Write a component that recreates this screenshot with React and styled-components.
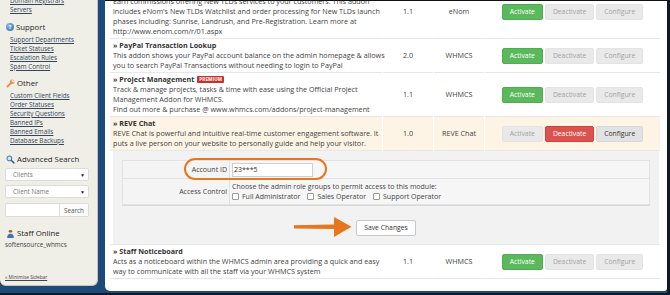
import React from 'react';
import styled, { createGlobalStyle, css } from 'styled-components';

const Global = createGlobalStyle`
  html, body { margin: 0; padding: 0; }
  body {
    font-family: "Open Sans", "Liberation Sans", sans-serif;
    width: 670px; height: 295px; overflow: hidden; background: #1c4a79;
  }
  * { box-sizing: border-box; }
`;

const Frame = styled.div`
  width: 670px; height: 295px;
  background: #1c4a79;
  border-right: 3px solid #101a24;
  border-bottom: 2px solid #101a24;
  display: flex; align-items: flex-start; gap: 7px;
  overflow: hidden;
`;

/* ---------- Sidebar ---------- */
const Sidebar = styled.aside`
  width: 98px; height: 286px; flex: none;
  background: #efeee7;
  border-right: 1px solid #c6c5bc;
  border-bottom: 1px solid #c6c5bc;
  border-radius: 0 0 6px 6px;
  padding: 0 8px 4px 5px;
  display: flex; flex-direction: column;
  overflow: hidden;
`;

const LinkList = styled.div`
  display: flex; flex-direction: column;
  margin: ${p => p.$first ? '-4px' : '0'} 0 0 5px;
`;

const SideLink = styled.a`
  display: block; height: 9px; line-height: 9px;
  font-size: 6.3px; color: #35465a; text-decoration: underline;
  white-space: nowrap;
`;

const SideHead = styled.div`
  display: flex; align-items: center; gap: 2px;
  height: 12px; margin: ${p => p.$mt}px 0 ${p => p.$mb}px 1px;
  font-size: 7.8px; color: #1e1e1e; white-space: nowrap;
`;

const QIcon = styled.span`
  width: 8px; height: 8px; border-radius: 50%;
  background: radial-gradient(circle at 35% 30%, #8bb6e6, #2f68ad);
  color: #fff; font-size: 5.5px; font-weight: 700; line-height: 8px; text-align: center;
`;

const SelectBox = styled.div`
  height: 13px; margin-top: ${p => p.$mt}px;
  background: #fff; border: 1px solid #dcdcdc; border-radius: 2px;
  display: flex; align-items: center; justify-content: space-between;
  padding: 0 3px 0 7px;
  font-size: 6.3px; color: #777;
`;

const Caret = styled.span`
  font-size: 5px; color: #222;
`;

const SearchRow = styled.div`
  height: 14px; margin-top: 5px; display: flex;
`;

const SearchInput = styled.div`
  flex: 1; background: #fff; border: 1px solid #dcdcdc; border-radius: 2px 0 0 2px;
`;

const SearchBtn = styled.div`
  width: 29px; background: #fbfbfb; border: 1px solid #dcdcdc; border-left: none;
  border-radius: 0 2px 2px 0; font-size: 6.3px; color: #555;
  display: flex; align-items: center; justify-content: center;
`;

const StaffName = styled.div`
  margin-top: 1px; height: 9px; line-height: 9px; font-size: 6.3px; color: #444;
`;

const Minimise = styled.a`
  margin-top: auto; height: 8px; line-height: 8px; font-size: 4.8px; color: #444;
  text-decoration: underline;
`;

/* ---------- Content ---------- */
const Content = styled.main`
  position: relative;
  width: 562px; height: 291px; flex: none;
  background: #fff;
  border-top: 1px solid #111;
  border-radius: 0 0 3px 5px;
  padding: 0 0 0 4px;
  overflow: hidden;
`;

const Table = styled.table`
  width: 552px; table-layout: fixed;
  border-collapse: separate; border-spacing: 1px 0;
  margin-top: -16px;
`;

const Row = styled.tr`
  background: ${p => p.$active ? '#fdf4e6' : '#fff'};
`;

const Cell = styled.td`
  padding: 1px 3px 2px;
  border-bottom: 1px solid #e7e7e7;
  vertical-align: middle;
  font-size: 7.2px; line-height: 10px; color: #444;
  white-space: nowrap;
  text-align: ${p => p.$align || 'left'};
  ${p => p.$actions && css`padding: 0;`}
`;

const Title = styled.div`
  font-weight: 700; color: #333; display: flex; align-items: center; gap: 3px;
`;

const Premium = styled.span`
  background: #c9302c; color: #fff; font-size: 4.6px; font-weight: 700;
  line-height: 7px; padding: 0 2px; border-radius: 1px; letter-spacing: 0.1px;
`;

const Buttons = styled.div`
  display: flex; justify-content: center; gap: 2px;
`;

const variants = {
  success: css`background: #5cb85c; border-color: #4cae4c; color: #fff;`,
  danger: css`background: #d9534f; border-color: #d43f3a; color: #fff;`,
  default: css`background: #e2e2e2; border-color: #d8d8d8; color: #333;`,
  disabled: css`background: #e9e9e9; border-color: #e3e3e3; color: #a3a3a3;`,
};

const Btn = styled.span`
  height: 16px; padding: 0 7px; border: 1px solid; border-radius: 2px;
  font-size: 6.8px; line-height: 14px;
  ${p => variants[p.$v]}
`;

const ConfigCell = styled.td`
  padding: 0 1px 0 3px; border-bottom: 1px solid #e7e7e7;
`;

const ConfigPanel = styled.div`
  background: #f2f2f2;
  padding: 9px 9px 8px;
  display: flex; flex-direction: column; align-items: center;
`;

const FormTable = styled.table`
  position: relative;
  width: 100%; border-collapse: collapse;
  border: 1px solid #d9d9d9;
  font-size: 7px; color: #444;
`;

const Label = styled.td`
  width: 107px; text-align: right; padding: 0 2px 0 0;
  background: #f4f4f4; border: 1px solid #e2e2e2;
  height: ${p => p.$h}px; white-space: nowrap;
`;

const Field = styled.td`
  padding: 0 2px; background: #f6f6f6; border: 1px solid #e2e2e2;
  line-height: 10px; white-space: nowrap;
`;

const Input = styled.div`
  width: 81px; height: 14px; background: #fff; border: 1px solid #cfcfcf;
  font-size: 7px; color: #333; padding: 0 1px; line-height: 12px;
`;

const Checks = styled.div`
  display: flex; gap: 7px;
`;

const Check = styled.span`
  display: flex; align-items: center; gap: 3px;
  &::before {
    content: ''; width: 5px; height: 5px; border: 1px solid #9a9a9a;
    background: #fff; border-radius: 1px;
  }
`;

const Highlight = styled.div`
  position: absolute; left: 61px; top: -3px; width: 143px; height: 22px;
  border: 2px solid #e5771e; border-radius: 11px; pointer-events: none;
`;

const SaveWrap = styled.div`
  position: relative; margin-top: 14px;
`;

const SaveBtn = styled.span`
  display: block; height: 16px; padding: 0 7px; line-height: 14px;
  background: #fff; border: 1px solid #c8c8c8; border-radius: 2px;
  font-size: 6.8px; color: #333;
`;

const Arrow = styled.svg`
  position: absolute; right: calc(100% + 4px); top: -4px;
`;

/* ---------- Icons ---------- */
const WrenchIcon = () => (
  <svg width="9" height="9" viewBox="0 0 16 16">
    <path d="M2.5 13.5 L9 7" stroke="#e98a3f" strokeWidth="3.2" strokeLinecap="round" />
    <circle cx="11" cy="5" r="4" fill="#e98a3f" />
    <path d="M11.5 1 L15 4.5 L13 6.5 L9.5 3 Z" fill="#efeee7" />
  </svg>
);

const SearchIcon = () => (
  <svg width="9" height="9" viewBox="0 0 16 16">
    <circle cx="6" cy="6" r="4.2" fill="#cfe3f7" stroke="#4d7fb8" strokeWidth="1.8" />
    <path d="M9.3 9.3 L14 14" stroke="#3b5f8a" strokeWidth="2.6" strokeLinecap="round" />
  </svg>
);

const StaffIcon = () => (
  <svg width="9" height="9" viewBox="0 0 16 16">
    <circle cx="8" cy="4.5" r="3.3" fill="#e6a36b" />
    <path d="M8 2 C5 2 4.6 4 4.8 4.8 L11.2 4.8 C11.4 4 11 2 8 2 Z" fill="#7a4a26" />
    <path d="M2 16 C2 10.5 4.5 8.5 8 8.5 C11.5 8.5 14 10.5 14 16 Z" fill="#3f74bb" />
  </svg>
);

/* ---------- Data ---------- */
const addons = [
  {
    title: 'eNom New TLDs',
    lines: [
      'Earn commissions offering New TLDs services to your customers. This addon',
      "includes eNom's New TLDs Watchlist and order processing for New TLDs launch",
      'phases including: Sunrise, Landrush, and Pre-Registration. Learn more at',
      'http://www.enom.com/r/01.aspx',
    ],
    version: '1.1', author: 'eNom', active: false,
  },
  {
    title: 'PayPal Transaction Lookup',
    lines: [
      'This addon shows your PayPal account balance on the admin homepage & allows',
      'you to search PayPal Transactions without needing to login to PayPal',
    ],
    version: '2.0', author: 'WHMCS', active: false,
  },
  {
    title: 'Project Management', premium: true,
    lines: [
      'Track & manage projects, tasks & time with ease using the Official Project',
      'Management Addon for WHMCS.',
      'Find out more & purchase @ www.whmcs.com/addons/project-management',
    ],
    version: '1.1', author: 'WHMCS', active: false,
  },
  {
    title: 'REVE Chat',
    lines: [
      'REVE Chat is powerful and intuitive real-time customer engagement software. It',
      'puts a live person on your website to personally guide and help your visitor.',
    ],
    version: '1.0', author: 'REVE Chat', active: true, config: true,
  },
  {
    title: 'Staff Noticeboard',
    lines: [
      'Acts as a noticeboard within the WHMCS admin area providing a quick and easy',
      'way to communicate with all the staff via your WHMCS system',
    ],
    version: '1.1', author: 'WHMCS', active: false,
  },
];

const AddonRow = ({ a }) => (
  <Row $active={a.active}>
    <Cell>
      <Title>» {a.title}{a.premium && <Premium>PREMIUM</Premium>}</Title>
      {a.lines.map((l, i) => <div key={i}>{l}</div>)}
    </Cell>
    <Cell $align="center">{a.version}</Cell>
    <Cell $align="center">{a.author}</Cell>
    <Cell $actions>
      <Buttons>
        <Btn $v={a.active ? 'disabled' : 'success'}>Activate</Btn>
        <Btn $v={a.active ? 'danger' : 'disabled'}>Deactivate</Btn>
        <Btn $v={a.active ? 'default' : 'disabled'}>Configure</Btn>
      </Buttons>
    </Cell>
  </Row>
);

const ConfigRow = () => (
  <tr>
    <ConfigCell colSpan={4}>
      <ConfigPanel>
        <FormTable>
          <tbody>
            <tr>
              <Label $h={18}>Account ID</Label>
              <Field><Input>23***5</Input></Field>
            </tr>
            <tr>
              <Label $h={26}>Access Control</Label>
              <Field>
                <div>Choose the admin role groups to permit access to this module:</div>
                <Checks>
                  <Check>Full Administrator</Check>
                  <Check>Sales Operator</Check>
                  <Check>Support Operator</Check>
                </Checks>
              </Field>
            </tr>
          </tbody>
          <Highlight as="caption" />
        </FormTable>
        <SaveWrap>
          <Arrow width="58" height="22" viewBox="0 0 58 22">
            <path d="M0 9.2 L40 8.6 L40 1 L57.5 10.8 L40 21 L40 13 L0 12.6 Z" fill="#e5771e" />
          </Arrow>
          <SaveBtn>Save Changes</SaveBtn>
        </SaveWrap>
      </ConfigPanel>
    </ConfigCell>
  </tr>
);

export default function App() {
  return (
    <>
      <Global />
      <Frame>
        <Sidebar>
          <LinkList $first>
            <SideLink>Domain Registrars</SideLink>
            <SideLink>Servers</SideLink>
          </LinkList>
          <SideHead $mt={7} $mb={2}><QIcon>?</QIcon>Support</SideHead>
          <LinkList>
            <SideLink>Support Departments</SideLink>
            <SideLink>Ticket Statuses</SideLink>
            <SideLink>Escalation Rules</SideLink>
            <SideLink>Spam Control</SideLink>
          </LinkList>
          <SideHead $mt={6} $mb={2}><WrenchIcon />Other</SideHead>
          <LinkList>
            <SideLink>Custom Client Fields</SideLink>
            <SideLink>Order Statuses</SideLink>
            <SideLink>Security Questions</SideLink>
            <SideLink>Banned IPs</SideLink>
            <SideLink>Banned Emails</SideLink>
            <SideLink>Database Backups</SideLink>
          </LinkList>
          <SideHead $mt={8} $mb={0}><SearchIcon />Advanced Search</SideHead>
          <SelectBox $mt={3}>Clients<Caret>▼</Caret></SelectBox>
          <SelectBox $mt={4}>Client Name<Caret>▼</Caret></SelectBox>
          <SearchRow>
            <SearchInput />
            <SearchBtn>Search</SearchBtn>
          </SearchRow>
          <SideHead $mt={10} $mb={0}><StaffIcon />Staff Online</SideHead>
          <StaffName>softensource_whmcs</StaffName>
          <Minimise>« Minimise Sidebar</Minimise>
        </Sidebar>
        <Content>
          <Table>
            <colgroup>
              <col style={{ width: 272 }} />
              <col style={{ width: 50 }} />
              <col style={{ width: 50 }} />
              <col style={{ width: 175 }} />
            </colgroup>
            <tbody>
              {addons.map((a, i) => (
                <React.Fragment key={i}>
                  <AddonRow a={a} />
                  {a.config && <ConfigRow />}
                </React.Fragment>
              ))}
            </tbody>
          </Table>
        </Content>
      </Frame>
    </>
  );
}
